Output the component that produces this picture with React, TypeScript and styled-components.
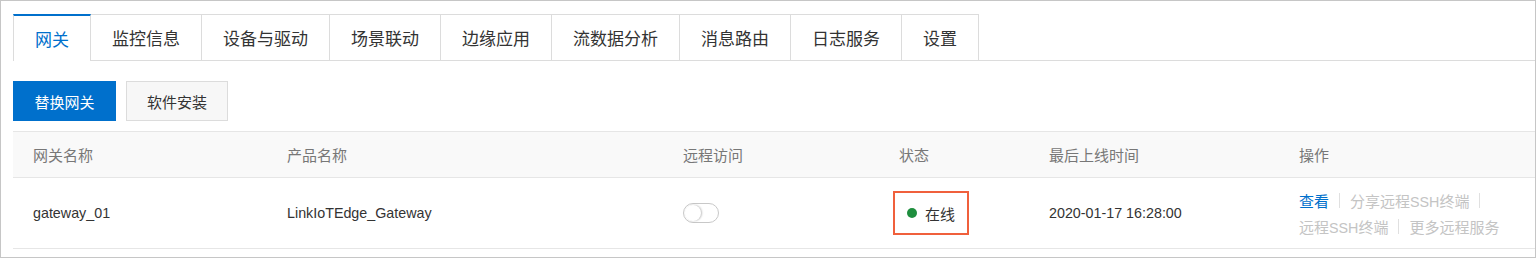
import React from "react";
import styled, { createGlobalStyle } from "styled-components";

const GlobalStyle = createGlobalStyle`
  body {
    margin: 0;
    background: #fff;
    font-family: "Liberation Sans", "Noto Sans CJK SC", sans-serif;
  }
`;

const tabs = [
  "网关",
  "监控信息",
  "设备与驱动",
  "场景联动",
  "边缘应用",
  "流数据分析",
  "消息路由",
  "日志服务",
  "设置",
];

const columns = ["网关名称", "产品名称", "远程访问", "状态", "最后上线时间", "操作"];

const App = () => {
  return (
    <>
      <GlobalStyle />
      <Frame>
        <TabBar>
          {tabs.map((t, i) => (
            <Tab key={t} $active={i === 0} $first={i === 0}>
              {t}
            </Tab>
          ))}
        </TabBar>
        <Toolbar>
          <Button $primary>替换网关</Button>
          <Button>软件安装</Button>
        </Toolbar>
        <Table>
          <HeadRow>
            {columns.map((c) => (
              <HeadCell key={c}>{c}</HeadCell>
            ))}
          </HeadRow>
          <BodyRow>
            <Cell>
              <Latin>gateway_01</Latin>
            </Cell>
            <Cell>
              <Latin>LinkIoTEdge_Gateway</Latin>
            </Cell>
            <Cell>
              <Switch>
                <Knob />
              </Switch>
            </Cell>
            <Cell>
              <StatusMark>
                <Dot />
                在线
              </StatusMark>
            </Cell>
            <Cell>
              <Latin>2020-01-17 16:28:00</Latin>
            </Cell>
            <Cell>
              <Actions>
                <ActionLine>
                  <Action $enabled>查看</Action>
                  <Sep />
                  <Action>
                    分享远程<Latin>SSH</Latin>终端
                  </Action>
                  <Sep />
                </ActionLine>
                <ActionLine>
                  <Action>
                    远程<Latin>SSH</Latin>终端
                  </Action>
                  <Sep />
                  <Action>更多远程服务</Action>
                </ActionLine>
              </Actions>
            </Cell>
          </BodyRow>
        </Table>
      </Frame>
    </>
  );
};

const Frame = styled.div`
  width: 1536px;
  height: 258px;
  box-sizing: border-box;
  border: 1px solid #c6c6c6;
  padding: 13px 0 0 12px;
  display: flex;
  flex-direction: column;
`;

const TabBar = styled.div`
  display: flex;
  border-bottom: 1px solid #dcdcdc;
  height: 46px;
`;

const Tab = styled.div<{ $active?: boolean; $first?: boolean }>`
  box-sizing: border-box;
  height: ${(p) => (p.$active ? "47px" : "46px")};
  padding: 0 21px;
  display: flex;
  align-items: center;
  font-size: 17px;
  color: ${(p) => (p.$active ? "#0070cc" : "#333")};
  background: #fff;
  border-top: ${(p) => (p.$active ? "2px solid #0070cc" : "1px solid #dcdcdc")};
  border-right: 1px solid #dcdcdc;
  border-left: ${(p) => (p.$first ? "1px solid #dcdcdc" : "none")};
  padding-bottom: ${(p) => (p.$active ? "1px" : "0")};
  position: relative;
  z-index: ${(p) => (p.$active ? 1 : 0)};
`;

const Toolbar = styled.div`
  display: flex;
  gap: 10px;
  margin-top: 20px;
`;

const Button = styled.div<{ $primary?: boolean }>`
  box-sizing: border-box;
  height: 40px;
  width: ${(p) => (p.$primary ? "103px" : "102px")};
  display: flex;
  align-items: center;
  justify-content: center;
  font-size: 15px;
  color: ${(p) => (p.$primary ? "#fff" : "#333")};
  background: ${(p) => (p.$primary ? "#0070cc" : "#f7f7f7")};
  border: 1px solid ${(p) => (p.$primary ? "#0070cc" : "#dcdcdc")};
`;

const Table = styled.div`
  margin-top: 10px;
  border-top: 1px solid #e6e6e6;
`;

const grid = `
  display: grid;
  grid-template-columns: 254px 396px 216px 150px 250px 1fr;
`;

const HeadRow = styled.div`
  ${grid}
  height: 45px;
  background: #f9f9f9;
  border-bottom: 1px solid #e6e6e6;
  align-items: center;
`;

const HeadCell = styled.div`
  padding-left: 20px;
  font-size: 15px;
  color: #777;
`;

const BodyRow = styled.div`
  ${grid}
  height: 70px;
  border-bottom: 1px solid #e6e6e6;
  align-items: center;
`;

const Cell = styled.div`
  padding-left: 20px;
  font-size: 15px;
  color: #333;
  display: flex;
  align-items: center;
`;

const Latin = styled.span`
  font-size: 14.3px;
`;

const Switch = styled.div`
  box-sizing: border-box;
  width: 36px;
  height: 20px;
  border: 1px solid #c8c8c8;
  border-radius: 10px;
  background: #fff;
  display: flex;
  align-items: center;
  padding-left: 1px;
`;

const Knob = styled.div`
  width: 16px;
  height: 16px;
  border-radius: 50%;
  background: #fff;
  box-shadow: 1px 0 2px rgba(0, 0, 0, 0.25);
`;

const StatusMark = styled.div`
  box-sizing: border-box;
  margin-left: -6px;
  width: 76px;
  height: 44px;
  border: 2px solid #f0603c;
  display: flex;
  align-items: center;
  padding-left: 12px;
  gap: 8px;
  font-size: 15px;
  color: #333;
`;

const Dot = styled.span`
  width: 10px;
  height: 10px;
  border-radius: 50%;
  background: #1e8e3e;
`;

const Actions = styled.div`
  display: flex;
  flex-direction: column;
  gap: 1px;
`;

const ActionLine = styled.div`
  display: flex;
  align-items: center;
  height: 25px;
`;

const Action = styled.span<{ $enabled?: boolean }>`
  font-size: 15px;
  color: ${(p) => (p.$enabled ? "#0070cc" : "#c4c4c4")};
  white-space: nowrap;
`;

const Sep = styled.span`
  width: 1px;
  height: 15px;
  background: #e0e0e0;
  margin: 0 10px;
`;

export default App;
